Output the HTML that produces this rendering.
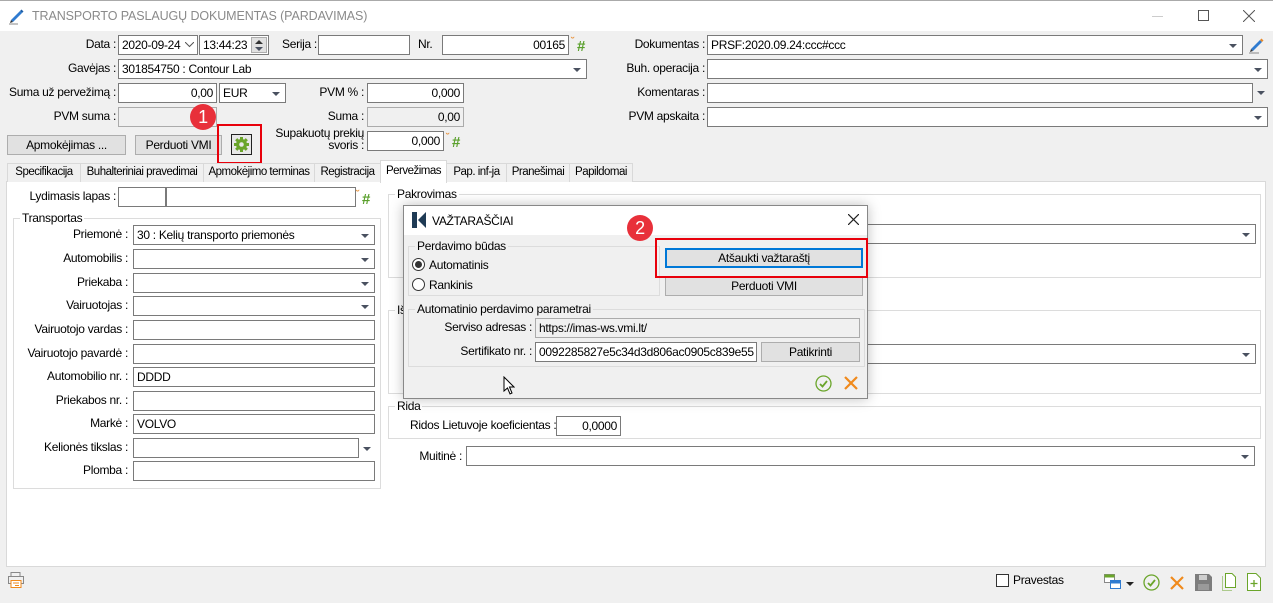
<!DOCTYPE html>
<html><head><meta charset="utf-8"><style>
*{box-sizing:border-box;margin:0;padding:0}
body{width:1273px;height:603px;overflow:hidden;background:#f0f0f0;font-family:"Liberation Sans",sans-serif;font-size:12px;color:#000;position:relative;letter-spacing:-0.3px}
.a{position:absolute}
.l{position:absolute;text-align:right;white-space:nowrap;line-height:14px}
.i{position:absolute;background:#fff;border:1px solid #7a7a7a;height:20px;line-height:18px;padding:0 3px;white-space:nowrap;overflow:hidden}
.g{background:#f0f0f0;border-color:#ababab}
.r{text-align:right}
.dd:after{content:"";position:absolute;right:5px;top:8px;border-left:4px solid transparent;border-right:4px solid transparent;border-top:4px solid #4a5160}
.arr{position:absolute;width:0;height:0;border-left:4px solid transparent;border-right:4px solid transparent;border-top:4px solid #4a5160}
.btn{position:absolute;background:#e1e1e1;border:1px solid #adadad;text-align:center;line-height:18px;height:20px}
.grp{position:absolute;border:1px solid #dcdcdc}
.grp>span{position:absolute;top:-8px;left:6px;background:inherit;padding:0 2px;line-height:14px}
.tab{position:absolute;top:163px;height:19px;border:1px solid #d9d9d9;border-bottom:none;background:#f0f0f0;line-height:17px;text-align:center;font-size:11.5px;letter-spacing:-0.5px;white-space:nowrap;overflow:hidden}
.hash{position:absolute;color:#5aa02c;font-weight:bold;font-size:15px;line-height:15px}
.hash:before{content:"˘";color:#e8892a;font-size:11px;position:absolute;left:-6px;top:-4px;font-weight:normal}
.circ{position:absolute;width:26px;height:26px;border-radius:13px;background:#e8303a;color:#fff;font-size:18px;text-align:center;line-height:26px}
.red{position:absolute;border:2px solid #e8000b}
</style></head><body>
<div class="a" style="left:0;top:0;width:1273px;height:31px;background:#fff;border-top:1px solid #aaa"></div>
<svg class="a" style="left:8px;top:7px" width="18" height="18" viewBox="0 0 18 18"><path d="M3 13 L12 4 L14 6 L5 15 Z" fill="#2f7bd0"/><path d="M12 4 L13.5 2.5 L15.5 4.5 L14 6Z" fill="#1c5fa8"/><path d="M3 13 L2 16 L5 15Z" fill="#333"/><line x1="1" y1="17" x2="10" y2="17" stroke="#888"/></svg>
<div class="a" style="left:32px;top:9px;color:#8a8a8a;font-size:12.5px;letter-spacing:-0.1px">TRANSPORTO PASLAUGŲ DOKUMENTAS (PARDAVIMAS)</div>
<div class="a" style="left:1152px;top:16px;width:11px;border-top:1px solid #ccc"></div>
<div class="a" style="left:1198px;top:10px;width:11px;height:11px;border:1px solid #555"></div>
<svg class="a" style="left:1243px;top:10px" width="12" height="12"><path d="M0 0L12 12M12 0L0 12" stroke="#555"/></svg>

<div class="l" style="right:1157px;top:37px">Data :</div>
<div class="i" style="left:118px;top:35px;width:80px">2020-09-24</div>
<svg class="a" style="left:185px;top:42px" width="9" height="6"><path d="M0 0L4.5 4.5L9 0" stroke="#555" fill="none"/></svg>
<div class="i" style="left:199px;top:35px;width:70px">13:44:23</div>
<div class="a" style="left:251px;top:37px;width:16px;height:16px;background:#e1e1e1;border:1px solid #adadad"></div>
<div class="arr" style="left:255px;top:47px"></div><div class="a" style="left:255px;top:40px;border-left:4px solid transparent;border-right:4px solid transparent;border-bottom:4px solid #333"></div>
<div class="l" style="left:282px;top:37px">Serija :</div>
<div class="i" style="left:318px;top:35px;width:92px"></div>
<div class="l" style="left:418px;top:37px">Nr.</div>
<div class="i r" style="left:442px;top:35px;width:127px">00165</div>
<div class="hash" style="left:577px;top:39px">#</div>
<div class="l" style="right:568px;top:37px">Dokumentas :</div>
<div class="i dd" style="left:707px;top:35px;width:536px">PRSF:2020.09.24:ccc#ccc</div>
<svg class="a" style="left:1248px;top:36px" width="18" height="18" viewBox="0 0 18 18"><path d="M3 13 L12 4 L14 6 L5 15 Z" fill="#2f7bd0"/><path d="M12 4 L13.5 2.5 L15.5 4.5 L14 6Z" fill="#e8892a"/><path d="M3 13 L2 16 L5 15Z" fill="#333"/><line x1="1" y1="17" x2="11" y2="17" stroke="#888"/></svg>

<div class="l" style="right:1157px;top:61px">Gavėjas :</div>
<div class="i dd" style="left:118px;top:59px;width:469px">301854750 : Contour Lab</div>
<div class="l" style="right:568px;top:61px">Buh. operacija :</div>
<div class="i dd" style="left:707px;top:59px;width:561px"></div>

<div class="l" style="right:1157px;top:85px">Suma už pervežimą :</div>
<div class="i r" style="left:118px;top:83px;width:99px">0,00</div>
<div class="i dd" style="left:219px;top:83px;width:67px">EUR</div>
<div class="l" style="right:909px;top:85px">PVM % :</div>
<div class="i r" style="left:367px;top:83px;width:97px">0,000</div>
<div class="l" style="right:568px;top:85px">Komentaras :</div>
<div class="i" style="left:707px;top:83px;width:546px"></div>
<div class="arr" style="left:1257px;top:91px"></div>

<div class="l" style="right:1157px;top:109px">PVM suma :</div>
<div class="i g" style="left:118px;top:107px;width:99px"></div>
<div class="l" style="right:909px;top:109px">Suma :</div>
<div class="i g r" style="left:367px;top:107px;width:97px">0,00</div>
<div class="l" style="right:568px;top:109px">PVM apskaita :</div>
<div class="i dd" style="left:707px;top:107px;width:561px"></div>

<div class="btn" style="left:7px;top:135px;width:119px">Apmokėjimas ...</div>
<div class="btn" style="left:135px;top:135px;width:87px">Perduoti VMI</div>
<div class="a" style="left:231px;top:134px;width:21px;height:21px;border:1px solid #222;background:#e8e8e8"></div>
<svg class="a" style="left:233px;top:136px" width="17" height="17" viewBox="0 0 17 17"><g fill="#6aa52a"><circle cx="8.5" cy="8.5" r="5.5"/><rect x="7" y="1" width="3" height="15"/><rect x="1" y="7" width="15" height="3"/><rect x="7" y="1" width="3" height="15" transform="rotate(45 8.5 8.5)"/><rect x="7" y="1" width="3" height="15" transform="rotate(-45 8.5 8.5)"/></g><circle cx="8.5" cy="8.5" r="2.3" fill="#e8e8e8"/></svg>
<div class="red" style="left:217px;top:124px;width:45px;height:40px"></div>
<div class="circ" style="left:190px;top:104px">1</div>
<div class="l" style="right:909px;top:127px;line-height:12px">Supakuotų prekių<br>svoris :</div>
<div class="i r" style="left:367px;top:131px;width:77px">0,000</div>
<div class="hash" style="left:452px;top:135px">#</div>

<div class="a" style="left:6px;top:181px;width:1260px;height:386px;background:#fff;border:1px solid #d9d9d9"></div>
<div class="tab" style="left:7px;width:74px">Specifikacija</div>
<div class="tab" style="left:80px;width:124px">Buhalteriniai pravedimai</div>
<div class="tab" style="left:203px;width:112px">Apmokėjimo terminas</div>
<div class="tab" style="left:314px;width:67px">Registracija</div>
<div class="tab" style="left:380px;top:160px;height:23px;width:67px;background:#fff;line-height:21px">Pervežimas</div>
<div class="tab" style="left:446px;width:61px">Pap. inf-ja</div>
<div class="tab" style="left:506px;width:64px">Pranešimai</div>
<div class="tab" style="left:569px;width:64px">Papildomai</div>

<div class="l" style="right:1157px;top:189px">Lydimasis lapas :</div>
<div class="i" style="left:118px;top:187px;width:48px"></div>
<div class="i" style="left:166px;top:187px;width:190px"></div>
<div class="hash" style="left:362px;top:192px">#</div>

<div class="grp" style="left:13px;top:218px;width:368px;height:271px;background:#fff"><span>Transportas</span></div>
<div class="l" style="right:1145px;top:227px">Priemonė :</div><div class="i dd" style="left:133px;top:225px;width:242px">30 : Kelių transporto priemonės</div>
<div class="l" style="right:1145px;top:251px">Automobilis :</div><div class="i dd" style="left:133px;top:249px;width:242px"></div>
<div class="l" style="right:1145px;top:275px">Priekaba :</div><div class="i dd" style="left:133px;top:273px;width:242px"></div>
<div class="l" style="right:1145px;top:298px">Vairuotojas :</div><div class="i dd" style="left:133px;top:296px;width:242px"></div>
<div class="l" style="right:1145px;top:322px">Vairuotojo vardas :</div><div class="i" style="left:133px;top:320px;width:242px"></div>
<div class="l" style="right:1145px;top:346px">Vairuotojo pavardė :</div><div class="i" style="left:133px;top:344px;width:242px"></div>
<div class="l" style="right:1145px;top:369px">Automobilio nr. :</div><div class="i" style="left:133px;top:367px;width:242px">DDDD</div>
<div class="l" style="right:1145px;top:393px">Priekabos nr. :</div><div class="i" style="left:133px;top:391px;width:242px"></div>
<div class="l" style="right:1145px;top:416px">Markė :</div><div class="i" style="left:133px;top:414px;width:242px">VOLVO</div>
<div class="l" style="right:1145px;top:440px">Kelionės tikslas :</div><div class="i" style="left:133px;top:438px;width:226px"></div><div class="arr" style="left:363px;top:447px"></div>
<div class="l" style="right:1145px;top:463px">Plomba :</div><div class="i" style="left:133px;top:461px;width:242px"></div>

<div class="grp" style="left:388px;top:194px;width:873px;height:84px;background:#fff"><span>Pakrovimas</span></div>
<div class="i dd" style="left:620px;top:224px;width:636px;border-left:none"></div>
<div class="grp" style="left:388px;top:310px;width:873px;height:84px;background:#fff"><span>Iš</span></div>
<div class="i dd" style="left:860px;top:344px;width:396px;border-left:none"></div>
<div class="grp" style="left:388px;top:406px;width:873px;height:33px;background:#fff"><span>Rida</span></div>
<div class="l" style="left:410px;top:418px">Ridos Lietuvoje koeficientas :</div>
<div class="i r" style="left:556px;top:416px;width:65px">0,0000</div>
<div class="l" style="right:811px;top:449px">Muitinė :</div>
<div class="i dd" style="left:466px;top:446px;width:789px"></div>

<div class="a" style="left:403px;top:205px;width:465px;height:194px;background:#f0f0f0;border:1px solid #888;box-shadow:0 0 12px rgba(0,0,0,.25)"></div>
<div class="a" style="left:404px;top:206px;width:463px;height:29px;background:#fff"></div>
<svg class="a" style="left:412px;top:212px" width="14" height="16" viewBox="0 0 14 16"><path d="M0 0H5V16H0Z M6 8L14 0V16Z" fill="#1f3b55"/><path d="M5 0L6 0 6 16 5 16Z" fill="#fff"/></svg>
<div class="a" style="left:432px;top:214px">VAŽTARAŠČIAI</div>
<svg class="a" style="left:848px;top:214px" width="11" height="11"><path d="M0 0L11 11M11 0L0 11" stroke="#222" stroke-width="1.2"/></svg>
<div class="grp" style="left:408px;top:246px;width:252px;height:50px"><span style="background:#f0f0f0">Perdavimo būdas</span></div>
<div class="a" style="left:412px;top:258px;width:13px;height:13px;border-radius:7px;border:1px solid #333;background:#fff"></div>
<div class="a" style="left:415px;top:261px;width:7px;height:7px;border-radius:4px;background:#333"></div>
<div class="a" style="left:429px;top:258px">Automatinis</div>
<div class="a" style="left:412px;top:278px;width:13px;height:13px;border-radius:7px;border:1px solid #333;background:#fff"></div>
<div class="a" style="left:429px;top:278px">Rankinis</div>
<div class="btn" style="left:665px;top:248px;width:198px;border:2px solid #0078d7;line-height:16px">Atšaukti važtaraštį</div>
<div class="btn" style="left:665px;top:276px;width:198px">Perduoti VMI</div>
<div class="red" style="left:655px;top:238px;width:213px;height:40px"></div>
<div class="circ" style="left:627px;top:215px">2</div>
<div class="grp" style="left:408px;top:309px;width:457px;height:58px"><span style="background:#f0f0f0">Automatinio perdavimo parametrai</span></div>
<div class="l" style="right:741px;top:320px">Serviso adresas :</div>
<div class="i g" style="left:535px;top:318px;width:325px">https://imas-ws.vmi.lt/</div>
<div class="l" style="right:741px;top:344px">Sertifikato nr. :</div>
<div class="i" style="left:535px;top:342px;width:222px">0092285827e5c34d3d806ac0905c839e55</div>
<div class="btn" style="left:761px;top:342px;width:99px">Patikrinti</div>
<svg class="a" style="left:503px;top:376px" width="12" height="19" viewBox="0 0 12 19"><path d="M1 1V15L4.5 12L7 18L9 17L6.5 11H11Z" fill="#fff" stroke="#000"/></svg>
<svg class="a" style="left:815px;top:375px" width="17" height="17"><circle cx="8.5" cy="8.5" r="7.5" fill="none" stroke="#6aa52a" stroke-width="1.3"/><path d="M5 9L7.5 11.5L12 6" stroke="#6aa52a" stroke-width="1.8" fill="none"/></svg>
<svg class="a" style="left:844px;top:376px" width="14" height="14"><path d="M1 1L13 13M13 1L1 13" stroke="#f08a1c" stroke-width="2.2"/></svg>

<svg class="a" style="left:8px;top:572px" width="16" height="16" viewBox="0 0 16 16"><rect x="3" y="0.5" width="9" height="4" fill="none" stroke="#888"/><rect x="0.5" y="4.5" width="15" height="7" fill="none" stroke="#888"/><rect x="3" y="8.5" width="10" height="7" fill="#fff" stroke="#f08a1c"/><line x1="5" y1="11" x2="11" y2="11" stroke="#f08a1c"/><line x1="7" y1="13.5" x2="11" y2="13.5" stroke="#f08a1c"/></svg>
<div class="a" style="left:996px;top:574px;width:13px;height:13px;border:1px solid #333;background:#fff"></div>
<div class="a" style="left:1013px;top:573px">Pravestas</div>
<svg class="a" style="left:1104px;top:572px" width="18" height="18" viewBox="0 0 18 18"><rect x="0.5" y="2.5" width="10" height="8" fill="#fff" stroke="#888"/><rect x="0.5" y="2.5" width="10" height="3" fill="#6aa52a"/><rect x="6.5" y="8.5" width="10" height="8" fill="#fff" stroke="#2f7bd0"/><rect x="6.5" y="8.5" width="10" height="3" fill="#2f7bd0"/></svg>
<div class="arr" style="left:1126px;top:582px;border-top-color:#222"></div>
<svg class="a" style="left:1143px;top:574px" width="17" height="17"><circle cx="8.5" cy="8.5" r="7.5" fill="none" stroke="#6aa52a" stroke-width="1.3"/><path d="M5 9L7.5 11.5L12 6" stroke="#6aa52a" stroke-width="1.8" fill="none"/></svg>
<svg class="a" style="left:1170px;top:576px" width="14" height="14"><path d="M1 1L13 13M13 1L1 13" stroke="#f08a1c" stroke-width="2.2"/></svg>
<svg class="a" style="left:1195px;top:574px" width="17" height="17" viewBox="0 0 17 17"><path d="M0 0H14L17 3V17H0Z" fill="#7d7d7d"/><rect x="4" y="1" width="8" height="5" fill="#cfcfcf"/><rect x="3" y="10" width="11" height="6" fill="#9a9a9a"/></svg>
<svg class="a" style="left:1222px;top:573px" width="14" height="18" viewBox="0 0 14 18"><path d="M3.5 0.5H10L13.5 4V14.5H3.5Z" fill="#fff" stroke="#6aa52a"/><path d="M0.5 3.5V17.5H10.5" fill="none" stroke="#6aa52a" stroke-dasharray="1 1"/></svg>
<svg class="a" style="left:1247px;top:573px" width="14" height="18" viewBox="0 0 14 18"><path d="M0.5 0.5H9L13.5 5V17.5H0.5Z" fill="#fff" stroke="#6aa52a"/><path d="M7 7V14M3.5 10.5H10.5" stroke="#6aa52a" stroke-width="1.3"/></svg>
</body></html>
